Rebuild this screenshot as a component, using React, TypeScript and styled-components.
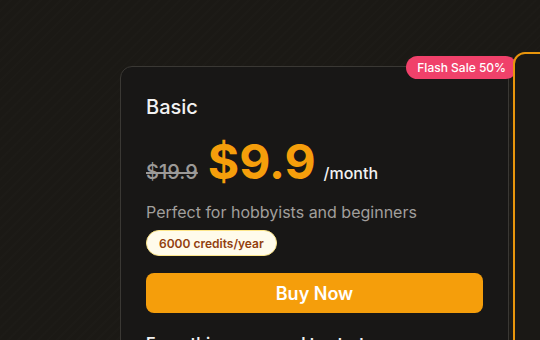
import React from 'react';
import styled, { createGlobalStyle } from 'styled-components';

const GlobalStyle = createGlobalStyle`
  html, body {
    margin: 0;
    padding: 0;
    background: #1b1915;
    font-family: Inter, "Noto Sans", sans-serif;
    -webkit-font-smoothing: antialiased;
  }
`;

const Page = styled.div`
  width: 540px;
  height: 340px;
  overflow: hidden;
  background:
    repeating-linear-gradient(
      135deg,
      rgba(255, 255, 255, 0.006) 0px,
      rgba(255, 255, 255, 0.006) 2px,
      transparent 2px,
      transparent 7px
    ),
    #1b1915;
`;

const Grid = styled.div`
  display: flex;
  align-items: flex-start;
  gap: 4px;
  padding: 52px 0 0 120px;
`;

const Card = styled.div<{ featured?: boolean }>`
  position: relative;
  flex: 0 0 auto;
  width: 389px;
  box-sizing: border-box;
  margin-top: ${({ featured }) => (featured ? '0' : '14px')};
  border: ${({ featured }) => (featured ? '2px solid #e8950c' : '1px solid #3a3834')};
  border-radius: 12px;
  background: ${({ featured }) => (featured ? '#1a1815' : '#181716')};
  padding: 26px 25px 24px;
  min-height: 320px;
`;

const Badge = styled.span`
  position: absolute;
  top: -11px;
  right: -9px;
  height: 23px;
  padding: 0 11px;
  display: flex;
  align-items: center;
  border-radius: 999px;
  background: #f0416a;
  color: #fff;
  font-size: 12px;
  font-weight: 500;
`;

const PlanName = styled.h3`
  margin: 0;
  font-size: 20px;
  line-height: 28px;
  font-weight: 500;
  color: #f2f2f2;
`;

const PriceRow = styled.div`
  display: flex;
  align-items: baseline;
  margin-top: 11px;
`;

const OldPrice = styled.span`
  font-size: 20px;
  font-weight: 500;
  color: #9c9a98;
  text-decoration: line-through;
  margin-right: 10px;
`;

const Price = styled.span`
  font-size: 48px;
  line-height: 60px;
  font-weight: 700;
  color: #f59e0b;
  margin-right: 8px;
`;

const Period = styled.span`
  font-size: 16px;
  font-weight: 500;
  color: #f2f2f2;
`;

const Description = styled.p`
  margin: 8px 0 0;
  font-size: 16px;
  line-height: 24px;
  color: #a19f9c;
`;

const Credits = styled.span`
  display: inline-flex;
  align-items: center;
  height: 26px;
  box-sizing: border-box;
  margin-top: 6px;
  padding: 0 12px;
  border: 1px solid #fde68a;
  border-radius: 999px;
  background: #fffbeb;
  color: #92400e;
  font-size: 12px;
  font-weight: 600;
`;

const BuyButton = styled.button`
  display: block;
  width: 100%;
  height: 40px;
  margin-top: 17px;
  border: none;
  border-radius: 8px;
  background: #f59e0b;
  color: #fff;
  font-family: inherit;
  font-size: 18px;
  font-weight: 600;
  cursor: pointer;
`;

const FeatureTitle = styled.p`
  margin: 20px 0 0;
  font-size: 16px;
  font-weight: 600;
  color: #f2f2f2;
`;

export default function App() {
  return (
    <Page>
      <GlobalStyle />
      <Grid>
        <Card>
          <Badge>Flash Sale 50%</Badge>
          <PlanName>Basic</PlanName>
          <PriceRow>
            <OldPrice>$19.9</OldPrice>
            <Price>$9.9</Price>
            <Period>/month</Period>
          </PriceRow>
          <Description>Perfect for hobbyists and beginners</Description>
          <Credits>6000 credits/year</Credits>
          <BuyButton>Buy Now</BuyButton>
          <FeatureTitle>Everything you need to start:</FeatureTitle>
        </Card>
        <Card featured />
      </Grid>
    </Page>
  );
}
